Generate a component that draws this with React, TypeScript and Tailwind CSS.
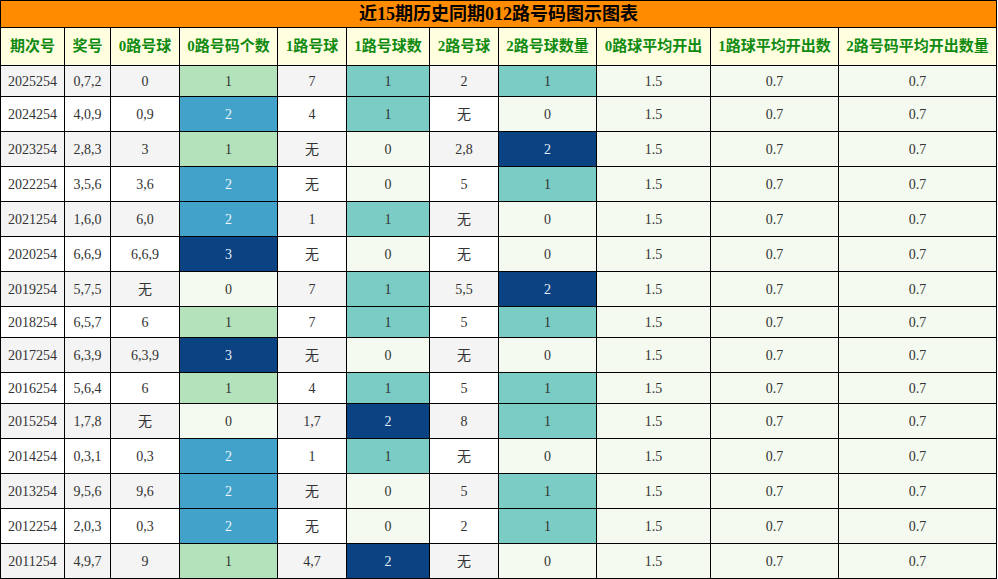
import React from "react";

type Row = [string, string, string, number, string, number, string, number];

const rows: Row[] = [
  ["2025254", "0,7,2", "0", 1, "7", 1, "2", 1],
  ["2024254", "4,0,9", "0,9", 2, "4", 1, "无", 0],
  ["2023254", "2,8,3", "3", 1, "无", 0, "2,8", 2],
  ["2022254", "3,5,6", "3,6", 2, "无", 0, "5", 1],
  ["2021254", "1,6,0", "6,0", 2, "1", 1, "无", 0],
  ["2020254", "6,6,9", "6,6,9", 3, "无", 0, "无", 0],
  ["2019254", "5,7,5", "无", 0, "7", 1, "5,5", 2],
  ["2018254", "6,5,7", "6", 1, "7", 1, "5", 1],
  ["2017254", "6,3,9", "6,3,9", 3, "无", 0, "无", 0],
  ["2016254", "5,6,4", "6", 1, "4", 1, "5", 1],
  ["2015254", "1,7,8", "无", 0, "1,7", 2, "8", 1],
  ["2014254", "0,3,1", "0,3", 2, "1", 1, "无", 0],
  ["2013254", "9,5,6", "9,6", 2, "无", 0, "5", 1],
  ["2012254", "2,0,3", "0,3", 2, "无", 0, "2", 1],
  ["2011254", "4,9,7", "9", 1, "4,7", 2, "无", 0],
];

const headers = [
  "期次号",
  "奖号",
  "0路号球",
  "0路号码个数",
  "1路号球",
  "1路号球数",
  "2路号球",
  "2路号球数量",
  "0路球平均开出",
  "1路球平均开出数",
  "2路号码平均开出数量",
];

const font = "font-['Liberation_Serif','Noto_Sans_CJK_SC',serif]";

function zeroCountCls(v: number) {
  if (v === 0) return "bg-[#f4faef] text-[#333]";
  if (v === 1) return "bg-[#b4e2bb] text-[#333]";
  if (v === 2) return "bg-[#43a2ca] text-[#eef6fa]";
  return "bg-[#0a4282] text-[#e6eef6]";
}

function otherCountCls(v: number) {
  if (v === 0) return "bg-[#f4faef] text-[#333]";
  if (v === 1) return "bg-[#7bccc4] text-[#333]";
  return "bg-[#0a4282] text-[#e6eef6]";
}

function Cell({ cls, h, children }: { cls: string; h: string; children: React.ReactNode }) {
  return <div className={`flex items-center justify-center ${h} ${cls}`}>{children}</div>;
}

export default function App() {
  return (
    <div className={`bg-white w-[998px] h-[579px] ${font}`}>
      <div className="grid w-[997px] grid-cols-[63px_45px_68px_97px_68px_82px_68px_97px_113px_127px_157px] gap-px bg-black p-px text-[14px] text-[#333]">
        <div className="col-span-11 flex h-[26px] items-center justify-center bg-[#ff8c00] text-[18px] font-bold text-black">
          近15期历史同期012路号码图示图表
        </div>
        {headers.map((h) => (
          <div
            key={h}
            className="flex h-[37px] items-center justify-center whitespace-nowrap bg-[#ffffe0] text-[15px] font-bold text-[#108a10]"
          >
            {h}
          </div>
        ))}
        {rows.map((r, i) => {
          const tall = r.some((c) => c === "无");
          const h = tall ? "h-[34px]" : "h-[30px]";
          const alt = i % 2 === 0 ? "bg-[#f4f4f4]" : "bg-white";
          return (
            <React.Fragment key={r[0]}>
              <Cell cls={alt} h={h}>{r[0]}</Cell>
              <Cell cls={alt} h={h}>{r[1]}</Cell>
              <Cell cls={alt} h={h}>{r[2]}</Cell>
              <Cell cls={zeroCountCls(r[3])} h={h}>{r[3]}</Cell>
              <Cell cls={alt} h={h}>{r[4]}</Cell>
              <Cell cls={otherCountCls(r[5])} h={h}>{r[5]}</Cell>
              <Cell cls={alt} h={h}>{r[6]}</Cell>
              <Cell cls={otherCountCls(r[7])} h={h}>{r[7]}</Cell>
              <Cell cls="bg-[#f4faef]" h={h}>1.5</Cell>
              <Cell cls="bg-[#f4faef]" h={h}>0.7</Cell>
              <Cell cls="bg-[#f4faef]" h={h}>0.7</Cell>
            </React.Fragment>
          );
        })}
      </div>
    </div>
  );
}
